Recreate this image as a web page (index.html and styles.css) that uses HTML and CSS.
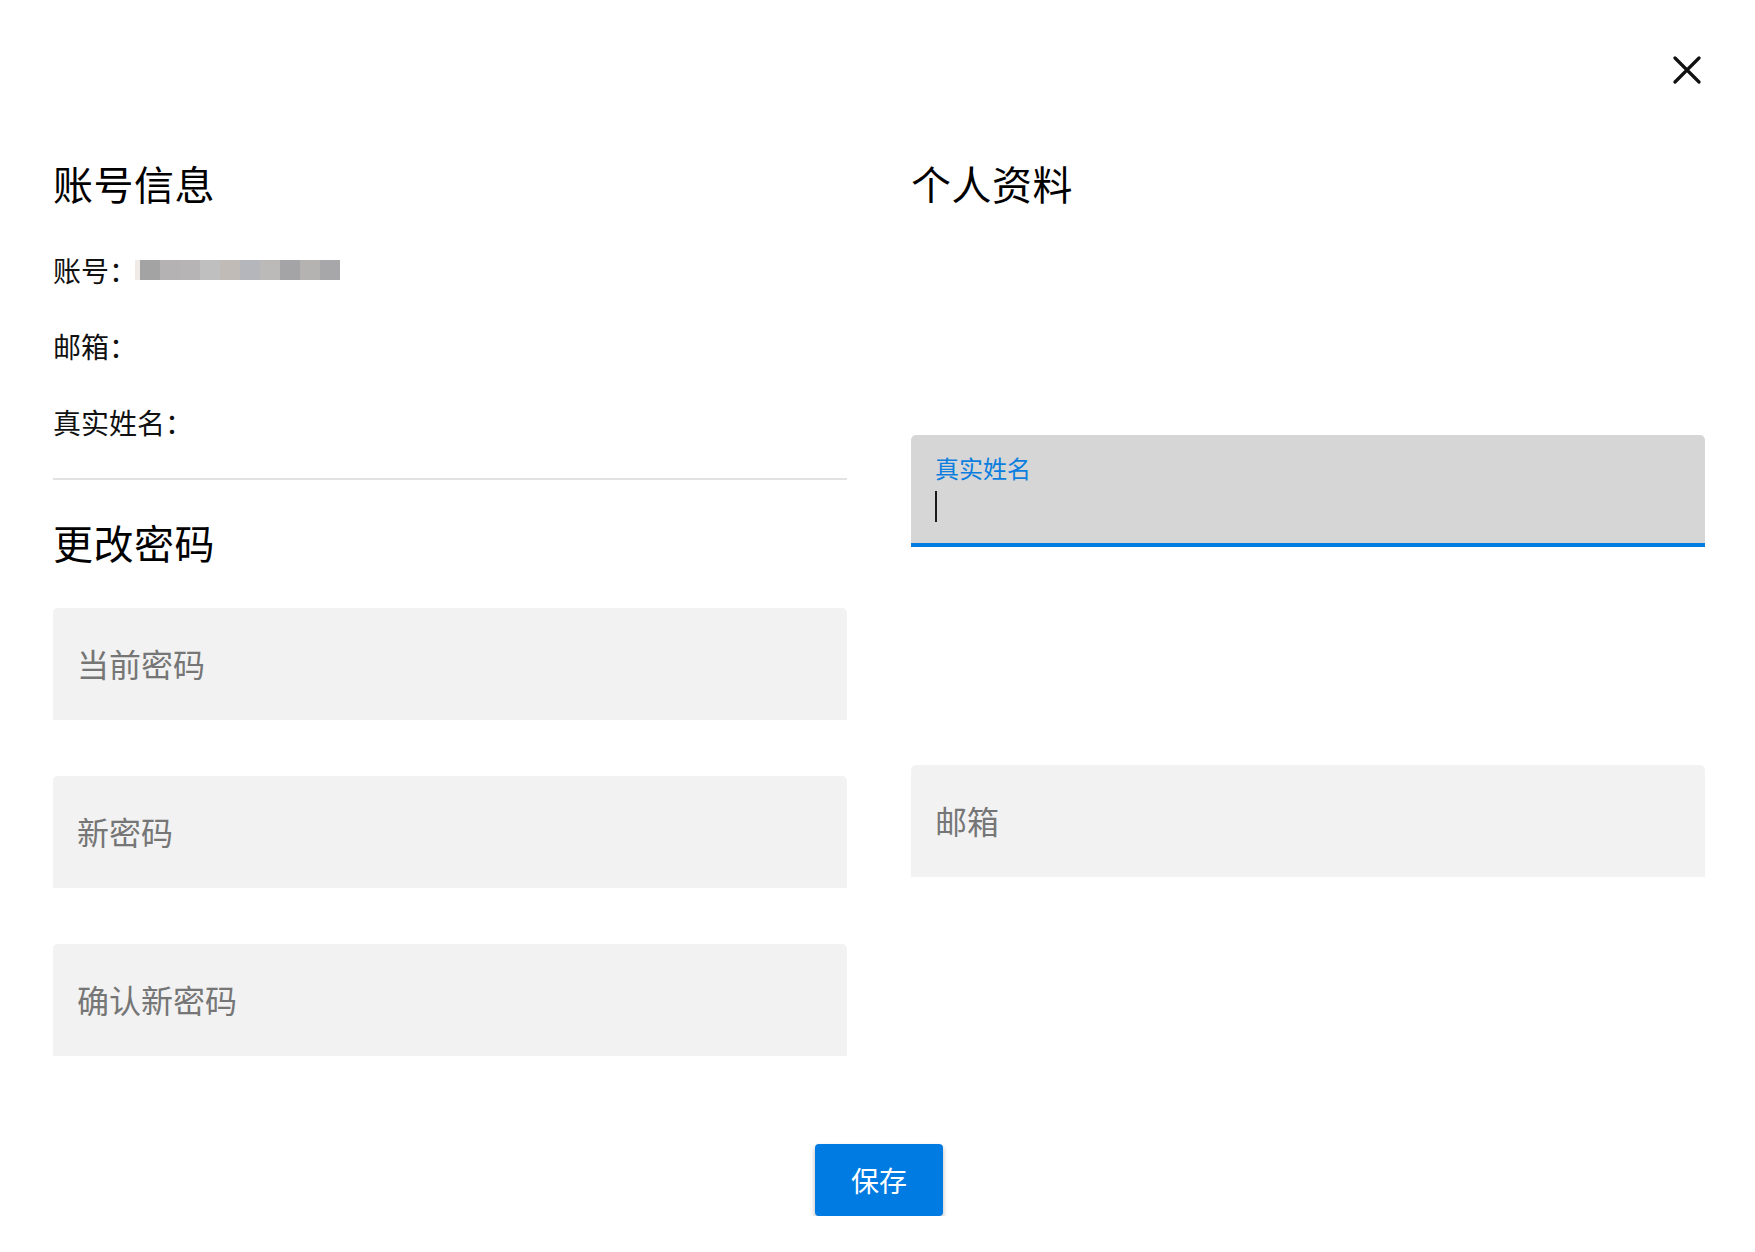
FILE: index.html
```html
<!DOCTYPE html>
<html lang="zh-CN">
<head>
<meta charset="utf-8">
<title>账号设置</title>
<link rel="stylesheet" href="styles.css">
</head>
<body>
<div class="dialog">
  <div class="topbar">
    <button class="close" aria-label="关闭">
      <svg width="28" height="28" viewBox="0 0 28 28"><path d="M2 2 L26 26 M26 2 L2 26" stroke="#111" stroke-width="3.2" stroke-linecap="round" fill="none"/></svg>
    </button>
  </div>
  <div class="columns">
    <section class="col">
      <h2 class="title">账号信息</h2>
      <div class="info">
        <div class="info-row">账号：<span class="blur"><i></i><i></i><i></i><i></i><i></i><i></i><i></i><i></i><i></i><i></i><i></i></span></div>
        <div class="info-row">邮箱：</div>
        <div class="info-row">真实姓名：</div>
      </div>
      <hr class="divider">
      <h2 class="title title-pw">更改密码</h2>
      <div class="fields">
        <div class="field"><span class="placeholder">当前密码</span></div>
        <div class="field"><span class="placeholder">新密码</span></div>
        <div class="field"><span class="placeholder">确认新密码</span></div>
      </div>
    </section>
    <section class="col">
      <h2 class="title">个人资料</h2>
      <div class="field field-focus">
        <span class="float-label">真实姓名</span>
        <span class="caret"></span>
      </div>
      <div class="field field-email"><span class="placeholder">邮箱</span></div>
    </section>
  </div>
  <div class="actions">
    <button class="save">保存</button>
  </div>
</div>
</body>
</html>
```
FILE: styles.css
```css
* { box-sizing: border-box; }
html, body { margin: 0; padding: 0; background: #fff; }
body {
  font-family: "Noto Sans CJK SC", "Microsoft YaHei", sans-serif;
  color: #111;
}
.dialog {
  width: 1755px;
  padding: 0 50px 0 53px;
}
.topbar {
  height: 159px;
  padding-top: 56px;
  display: flex;
  justify-content: flex-end;
}
.close {
  width: 28px;
  height: 28px;
  padding: 0;
  margin-right: 4px;
  border: 0;
  background: none;
  display: block;
}
.close svg { display: block; }
.columns {
  display: grid;
  grid-template-columns: 1fr 1fr;
  column-gap: 64px;
  align-items: start;
}
.col { display: flex; flex-direction: column; }
.title {
  margin: 0;
  font-size: 40px;
  line-height: 48px;
  font-weight: 400;
  color: #000;
  letter-spacing: 0.5px;
}
.info {
  margin-top: 43px;
  display: flex;
  flex-direction: column;
  gap: 36px;
}
.info-row {
  font-size: 28px;
  line-height: 40px;
  display: flex;
  align-items: center;
}
.blur { display: flex; height: 20px; margin-left: -2px; }
.blur i { display: block; width: 20px; height: 20px; }
.blur i:nth-child(1) { width: 5px; background: #f0ebe6; }
.blur i:nth-child(2) { background: #a3a3a4; }
.blur i:nth-child(3) { background: #b4b2b2; }
.blur i:nth-child(4) { background: #b6b4b4; }
.blur i:nth-child(5) { background: #bfbfbf; }
.blur i:nth-child(6) { background: #c0bbb6; }
.blur i:nth-child(7) { background: #b4b6bb; }
.blur i:nth-child(8) { background: #bcbab8; }
.blur i:nth-child(9) { background: #a4a4a6; }
.blur i:nth-child(10) { background: #b5b3b1; }
.blur i:nth-child(11) { background: #a7a7a9; }
.divider {
  margin: 36px 0 0;
  border: 0;
  height: 2px;
  background: #e2e2e2;
}
.title-pw { margin-top: 38px; }
.fields {
  margin-top: 42px;
  display: flex;
  flex-direction: column;
  gap: 56px;
}
.field {
  height: 112px;
  background: #f2f2f2;
  border-radius: 5px 5px 0 0;
  padding: 0 24px;
  display: flex;
  align-items: center;
}
.placeholder {
  font-size: 32px;
  line-height: 40px;
  color: #767676;
  margin-top: -2px;
}
.field-focus {
  margin-top: 228px;
  background: #d6d6d6;
  border-bottom: 4px solid #007be2;
  flex-direction: column;
  align-items: flex-start;
  padding-top: 21px;
}
.float-label {
  font-size: 24px;
  line-height: 24px;
  color: #0b7edf;
}
.caret {
  display: block;
  margin-top: 11px;
  width: 2px;
  height: 31px;
  background: #1a1a1a;
}
.field-email { margin-top: 218px; }
.actions {
  margin-top: 88px;
  display: flex;
  justify-content: center;
}
.save {
  width: 128px;
  height: 72px;
  border: 0;
  border-radius: 4px;
  background: #007be2;
  color: #fff;
  font-family: "Noto Sans CJK SC", "Microsoft YaHei", sans-serif;
  font-size: 28px;
  line-height: 40px;
  box-shadow: 0 3px 5px rgba(0, 0, 0, 0.3);
}
```
